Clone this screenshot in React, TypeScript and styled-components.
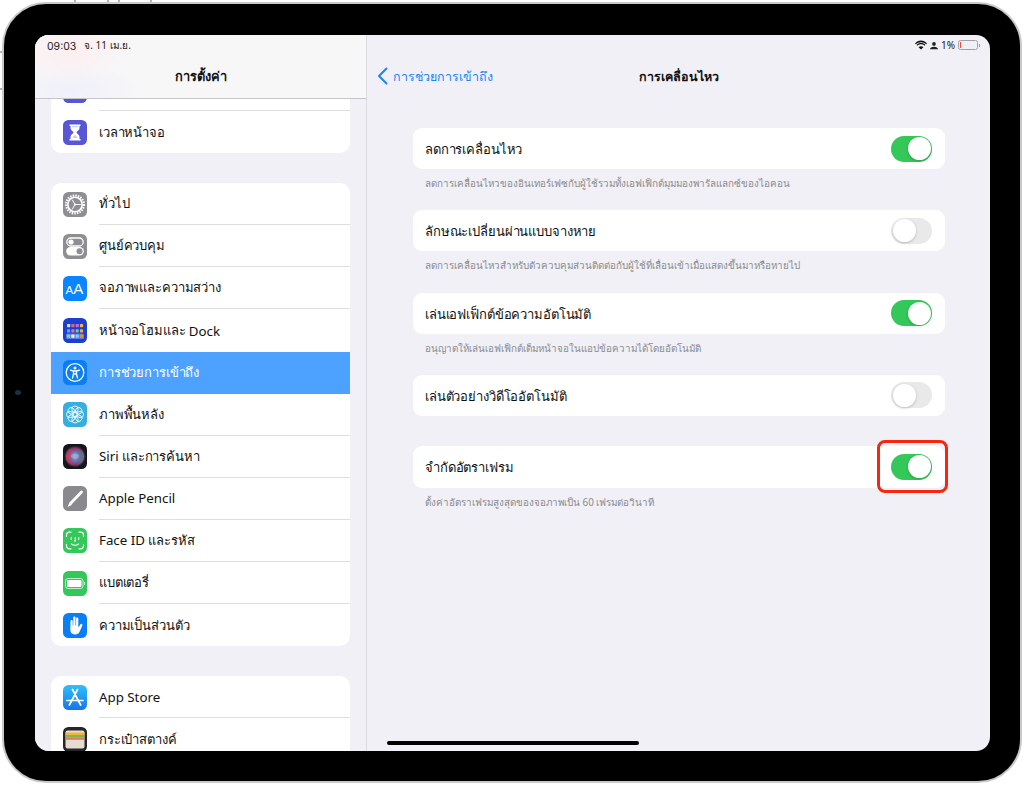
import React from "react";
import styled, { createGlobalStyle } from "styled-components";

const Global = createGlobalStyle`
  html, body { margin: 0; padding: 0; background: #fff; }
  body { font-family: "Noto Sans", "Inter", "DejaVu Sans", sans-serif; -webkit-font-smoothing: antialiased; }
`;

const Page = styled.div`
  width: 1024px;
  height: 785px;
  padding: 2px;
  box-sizing: border-box;
  overflow: hidden;
  position: relative;
`;
const Tick = styled.span<{ $x: number; $y: number }>`
  position: absolute;
  left: ${(p) => p.$x}px;
  top: ${(p) => p.$y}px;
  width: 2px;
  height: 2px;
  background: #b4b4b8;
`;
const Device = styled.div`
  width: 1020px;
  height: 781px;
  box-sizing: border-box;
  background: #000;
  border: 2px solid #c9c9cb;
  border-radius: 44px;
  padding: 31px 32px 30px 31px;
  position: relative;
`;
const Camera = styled.span`
  position: absolute;
  left: 11px;
  top: 386px;
  width: 6px;
  height: 5px;
  border-radius: 50%;
  background: #1c3147;
`;
const Screen = styled.div`
  width: 955px;
  height: 716px;
  border-radius: 14px;
  overflow: hidden;
  display: flex;
  position: relative;
  background: #f0f0f6;
`;
const Sidebar = styled.aside`
  width: 331px;
  flex: none;
  border-right: 1px solid #dcdce0;
  display: flex;
  flex-direction: column;
  background: #f0f0f6;
`;
const SideHeader = styled.header`
  height: 64px;
  flex: none;
  box-sizing: border-box;
  border-bottom: 1px solid #c6c6c9;
  background:
    radial-gradient(ellipse 60px 34px at 34px 16px, #fdeef0 0, rgba(253, 238, 240, 0) 100%),
    radial-gradient(ellipse 70px 30px at 36px 56px, #eff0fa 0, rgba(239, 240, 250, 0) 100%),
    #f7f7f8;
  position: relative;
`;
const Status = styled.div`
  position: absolute;
  left: 12px;
  top: 3px;
  font-size: 10px;
  line-height: 14px;
  color: #222;
  display: flex;
  align-items: baseline;
  gap: 8px;
`;
const Time = styled.span`
  font-family: "Inter", sans-serif;
  font-size: 10.5px;
  line-height: 14px;
  position: relative;
  top: 1px;
`;
const SideTitle = styled.h1`
  margin: 0;
  padding-top: 31px;
  text-align: center;
  font-size: 12.8px;
  line-height: 20px;
  font-weight: 700;
  color: #111;
`;
const SideList = styled.div`
  flex: 1;
  overflow: hidden;
  padding: 0 16px;
  display: flex;
  flex-direction: column;
  gap: 30px;
`;
const Group = styled.section<{ $clip?: boolean }>`
  background: #fff;
  border-radius: 10px;
  margin: ${(p) => (p.$clip ? "-30px 0 0" : "0")};
  flex: none;
`;
const Row = styled.div<{ $active?: boolean }>`
  height: 42.1px;
  box-sizing: border-box;
  padding-left: 12px;
  display: flex;
  align-items: center;
  gap: 12px;
  background: ${(p) => (p.$active ? "#4da2ff" : "transparent")};
  color: ${(p) => (p.$active ? "#fff" : "#111")};
`;
const IconBox = styled.span<{ $bg: string }>`
  width: 24px;
  height: 25px;
  flex: none;
  border-radius: 5.5px;
  background: ${(p) => p.$bg};
  display: flex;
  align-items: center;
  justify-content: center;
  overflow: hidden;
`;
const RowBody = styled.div<{ $line?: boolean }>`
  flex: 1;
  align-self: stretch;
  display: flex;
  align-items: center;
  white-space: pre;
  font-size: 13px;
  letter-spacing: -0.13px;
  border-bottom: ${(p) => (p.$line ? "1px solid #dededf" : "none")};
  box-sizing: border-box;
`;
const Latin = styled.span`
  font-size: 13.3px;
  letter-spacing: 0;
`;
const Detail = styled.main`
  flex: 1;
  position: relative;
  display: flex;
  flex-direction: column;
`;
const Nav = styled.nav`
  height: 93px;
  flex: none;
  box-sizing: border-box;
  padding: 32px 10px 0;
  position: relative;
  display: flex;
  align-items: flex-start;
  gap: 5px;
`;
const Back = styled.span`
  font-size: 12.5px;
  line-height: 20px;
  color: #1d84f5;
`;
const NavTitle = styled.h2`
  position: absolute;
  left: 0;
  right: 0;
  top: 32px;
  margin: 0;
  text-align: center;
  font-size: 12.5px;
  line-height: 20px;
  font-weight: 700;
  color: #111;
`;
const Content = styled.div`
  padding: 0 45px 0 46px;
  display: flex;
  flex-direction: column;
`;
const Card = styled.div<{ $h?: number; $mt?: number }>`
  height: ${(p) => p.$h ?? 41}px;
  margin-top: ${(p) => p.$mt ?? 0}px;
  background: #fff;
  border-radius: 9px;
  padding: 0 13px 0 12px;
  display: flex;
  align-items: center;
  justify-content: space-between;
  position: relative;
`;
const CardLabel = styled.span`
  font-size: 13px;
  letter-spacing: -0.13px;
  color: #111;
  padding-top: 2px;
`;
const Caption = styled.p`
  margin: 0 0 13.3px;
  padding: 6px 12px 0;
  height: 22px;
  font-size: 9.85px;
  line-height: 16px;
  color: #8b8b90;
`;
const Track = styled.span<{ $on: boolean }>`
  width: 41px;
  height: 26px;
  border-radius: 13px;
  background: ${(p) => (p.$on ? "#34c759" : "#e9e9ea")};
  display: flex;
  justify-content: ${(p) => (p.$on ? "flex-end" : "flex-start")};
  padding: 1.5px;
  box-sizing: border-box;
  flex: none;
`;
const Knob = styled.span`
  width: 23px;
  height: 23px;
  border-radius: 50%;
  background: #fff;
  box-shadow: 0 1px 3px rgba(0, 0, 0, 0.2);
`;
const Highlight = styled.span`
  position: absolute;
  right: -3px;
  top: -6px;
  width: 71px;
  height: 53px;
  box-sizing: border-box;
  border: 3px solid #f8260e;
  border-radius: 8px;
`;
const StatusRight = styled.div`
  position: absolute;
  right: 12px;
  top: 3px;
  height: 14px;
  display: flex;
  align-items: center;
  gap: 3px;
  font-size: 10px;
  color: #222;
`;
const Battery = styled.span`
  width: 18px;
  height: 8px;
  border: 1px solid #a2a2a6;
  border-radius: 2.5px;
  position: relative;
  display: block;
  box-sizing: content-box;
  &::before {
    content: "";
    position: absolute;
    left: 1px;
    top: 1px;
    bottom: 1px;
    width: 1px;
    background: #f04b3c;
  }
  &::after {
    content: "";
    position: absolute;
    right: -3px;
    top: 2.5px;
    width: 1.5px;
    height: 3px;
    background: #9a9a9e;
  }
`;
const Home = styled.span`
  position: absolute;
  left: 20px;
  bottom: 6px;
  width: 252px;
  height: 4px;
  border-radius: 2px;
  background: #000;
`;

const Sv = ({ children, fill = "#fff" }: { children: React.ReactNode; fill?: string }) => (
  <svg width="24" height="25" viewBox="0 0 24 25" fill={fill}>{children}</svg>
);

const gear = (
  <Sv fill="none">
    <circle cx="12" cy="12.5" r="9" stroke="#fff" strokeWidth="2.2" strokeDasharray="1.5 1.15" />
    <circle cx="12" cy="12.5" r="7.2" stroke="#fff" strokeWidth="1.6" />
    <path d="M12 12.5 9.2 7.6M12 12.5h5.8M12 12.5 9.2 17.4" stroke="#fff" strokeWidth="1" />
    <circle cx="12" cy="12.5" r="1" fill="#fff" />
  </Sv>
);
const control = (
  <Sv>
    <rect x="3.8" y="4" width="16.4" height="8" rx="4" fill="none" stroke="#fff" strokeWidth="1.3" />
    <circle cx="8" cy="8" r="2.6" fill="#fff" />
    <rect x="3.2" y="13" width="17.6" height="8.5" rx="4.2" fill="#fff" />
    <circle cx="16.5" cy="17.2" r="3" fill="#8e8e93" />
  </Sv>
);
const hourglass = (
  <Sv>
    <path d="M6.5 4.500h11V6h-1v2.300c0 1.800-2.600 3-3 4.200.4 1.200 3 2.400 3 4.200V19h1v1.500h-11V19h1v-2.300c0-1.800 2.600-3 3-4.200-.4-1.200-3-2.400-3-4.200V6h-1z" />
    <path d="M9 6v1.300h6V6zM12 14.800c-.8.900-2.200 1.800-2.500 3.200h5c-.3-1.400-1.700-2.300-2.500-3.200z" fill="#5856d6" fillOpacity=".3" />
  </Sv>
);
const aa = (
  <Sv>
    <text x="2.6" y="18" fontSize="11.5" fontFamily="Liberation Sans" fill="#fff">A</text>
    <text x="10.3" y="18" fontSize="15" fontFamily="Liberation Sans" fill="#fff">A</text>
  </Sv>
);
const dots = (
  <Sv>
    <rect x="3" y="15.5" width="18" height="5.5" rx="1.5" fill="#fff" fillOpacity=".3" />
    {[
      ["#d9d9e6", "#e85d75", "#b56ee0", "#e8b84a"],
      ["#4fa8ff", "#ff6b6b", "#5ad1a0", "#f7a541"],
      ["#6fe07b", "#e8e8f5", "#7ecbff", "#f08a3c"],
    ].map((r, y) =>
      r.map((c, x) => <rect key={`${x}${y}`} x={4 + x * 4.3} y={6 + y * 5.3} width="3.2" height="3.2" rx=".6" fill={c} />),
    )}
  </Sv>
);
const access = (
  <Sv fill="none">
    <circle cx="12" cy="12.5" r="8.8" stroke="#fff" strokeWidth="1.3" />
    <circle cx="12" cy="8" r="1.5" fill="#fff" />
    <path d="M7.500 10.200 10.500 11v3l-1 4M16.500 10.200 13.500 11v3l1 4M10.500 11h3M10.500 14h3" stroke="#fff" strokeWidth="1.3" strokeLinecap="round" strokeLinejoin="round" />
  </Sv>
);
const flower = (
  <Sv fill="none">
    {[0, 45, 90, 135, 180, 225, 270, 315].map((a) => (
      <circle key={a} cx="12" cy="7.2" r="3.2" stroke="#fff" strokeWidth=".9" transform={`rotate(${a} 12 12.5)`} />
    ))}
    <circle cx="12" cy="12.5" r="2" stroke="#fff" strokeWidth=".9" />
  </Sv>
);
const siri = (
  <Sv fill="none">
    <defs>
      <radialGradient id="siriG" cx="50%" cy="50%" r="50%">
        <stop offset="0" stopColor="#9fb2dc" />
        <stop offset=".45" stopColor="#4f7fc0" />
        <stop offset=".75" stopColor="#8f3570" />
        <stop offset="1" stopColor="#1c2a30" />
      </radialGradient>
      <linearGradient id="siriL" x1="0" x2="1">
        <stop offset="0" stopColor="#d8385a" stopOpacity=".95" />
        <stop offset=".5" stopColor="#d8385a" stopOpacity="0" />
        <stop offset="1" stopColor="#2a9d96" stopOpacity=".9" />
      </linearGradient>
    </defs>
    <circle cx="12" cy="12.5" r="10.5" fill="url(#siriG)" />
    <circle cx="12" cy="12.5" r="9" fill="url(#siriL)" />
    <ellipse cx="12" cy="12" rx="4" ry="2.6" fill="#aebfe8" fillOpacity=".45" />
  </Sv>
);
const pencil = (
  <Sv fill="none">
    <path d="M18.5 6 7.500 17.500" stroke="#fff" strokeWidth="2.8" strokeLinecap="round" />
    <path d="M6.500 16.500 4.500 21l4.300-2.100z" fill="#fff" />
  </Sv>
);
const face = (
  <Sv fill="none">
    <path d="M3.500 8.500V7A2.800 2.800 0 0 1 6.300 4.200H8M16 4.200h1.700A2.800 2.800 0 0 1 20.500 7v1.500M3.500 16.500V18a2.800 2.800 0 0 0 2.800 2.800H8M16 20.800h1.700A2.800 2.800 0 0 0 20.500 18v-1.500" stroke="#fff" strokeWidth="1.2" strokeLinecap="round" />
    <path d="M8.300 9.500v2M15.700 9.500v2M12.300 9.500v3.500h-1M8.500 16c2 1.500 5 1.500 7 0" stroke="#fff" strokeWidth="1.2" strokeLinecap="round" strokeLinejoin="round" />
  </Sv>
);
const batt = (
  <Sv>
    <rect x="2.5" y="7.5" width="17.5" height="10" rx="2.5" fill="none" stroke="#fff" strokeOpacity=".7" />
    <rect x="4" y="9" width="14.5" height="7" rx="1.3" fill="#fff" />
    <rect x="21" y="11" width="1" height="3" fill="#fff" fillOpacity=".7" />
  </Sv>
);
const hand = (
  <Sv>
    <path d="M7.500 8a1.100 1.100 0 0 1 2.200 0v4.500h.6V4.500a1.100 1.100 0 0 1 2.200 0v8h.6V5.500a1.100 1.100 0 0 1 2.200 0v8l.5.400 1.700-2.700a1.100 1.100 0 0 1 1.900 1l-2.600 6c-.9 2.100-2.400 3.300-4.800 3.300-3 0-4.700-1.900-4.700-4.700z" />
  </Sv>
);
const appstore = (
  <Sv fill="none">
    <path d="M9.500 4.500 16 17M14.500 4.500 8 17M4 15.500h16M6.300 20 8 17M17.700 20 16 17" stroke="#fff" strokeWidth="1.7" strokeLinecap="round" />
  </Sv>
);
const wallet = (
  <Sv>
    <rect x="2.5" y="3.5" width="19" height="18" rx="2" fill="#e2ddd0" />
    <rect x="2.5" y="5.5" width="19" height="2.5" fill="#f2b53c" />
    <rect x="2.5" y="8" width="19" height="2.3" fill="#79b957" />
    <rect x="2.5" y="10.3" width="19" height="2.5" fill="#e6785f" />
  </Sv>
);

const group2: { t: React.ReactNode; k: string; bg: string; i: React.ReactNode; active?: boolean }[] = [
  { k: "general", t: "ทั่วไป", bg: "#8e8e93", i: gear },
  { k: "control", t: "ศูนย์ควบคุม", bg: "#8e8e93", i: control },
  { k: "display", t: "จอภาพและความสว่าง", bg: "#0a84ff", i: aa },
  { k: "home", t: <>หน้าจอโฮมและ <Latin>Dock</Latin></>, bg: "#1c3fd0", i: dots },
  { k: "access", t: "การช่วยการเข้าถึง", bg: "#0a7ff5", i: access, active: true },
  { k: "wall", t: "ภาพพื้นหลัง", bg: "#36aee0", i: flower },
  { k: "siri", t: <><Latin>Siri</Latin> และการค้นหา</>, bg: "#15151c", i: siri },
  { k: "pencil", t: <Latin>Apple Pencil</Latin>, bg: "#8a8a8e", i: pencil },
  { k: "face", t: <><Latin>Face ID</Latin> และรหัส</>, bg: "#34c759", i: face },
  { k: "batt", t: "แบตเตอรี่", bg: "#34c759", i: batt },
  { k: "privacy", t: "ความเป็นส่วนตัว", bg: "#0a7ff5", i: hand },
];

const ticks = [
  { x: 74, y: 0 },
  { x: 107, y: 0 },
  { x: 118, y: 0 },
  { x: 150, y: 0 },
  { x: 0, y: 51 },
  { x: 0, y: 88 },
];

export default function App() {
  return (
    <Page>
      <Global />
      {ticks.map((t) => (
        <Tick key={`${t.x}-${t.y}`} $x={t.x} $y={t.y} />
      ))}
      <Device>
        <Camera />
        <Screen>
          <Sidebar>
            <SideHeader>
              <Status><Time>09:03</Time><span>จ. 11 เม.ย.</span></Status>
              <SideTitle>การตั้งค่า</SideTitle>
            </SideHeader>
            <SideList>
              <Group $clip>
                <Row>
                  <IconBox $bg="#5856d6" />
                  <RowBody $line />
                </Row>
                <Row>
                  <IconBox $bg="#5856d6">{hourglass}</IconBox>
                  <RowBody>เวลาหน้าจอ</RowBody>
                </Row>
              </Group>
              <Group>
                {group2.map((r, i) => (
                  <Row key={r.k} $active={r.active}>
                    <IconBox $bg={r.bg}>{r.i}</IconBox>
                    <RowBody $line={i < group2.length - 1 && !r.active && !group2[i + 1].active}>{r.t}</RowBody>
                  </Row>
                ))}
              </Group>
              <Group>
                <Row>
                  <IconBox $bg="linear-gradient(#2fc0fb,#1a74e8)">{appstore}</IconBox>
                  <RowBody $line><Latin>App Store</Latin></RowBody>
                </Row>
                <Row>
                  <IconBox $bg="#26262a">{wallet}</IconBox>
                  <RowBody>กระเป๋าสตางค์</RowBody>
                </Row>
              </Group>
            </SideList>
          </Sidebar>
          <Detail>
            <StatusRight>
              <svg width="12" height="10" viewBox="0 0 13 10"><path d="M6.500 2C8.700 2 10.700 2.900 12.100 4.300L13 3.300C11.300 1.300 9 .2 6.500.2S1.700 1.300 0 3.300l.9 1C2.300 2.900 4.300 2 6.500 2z" fill="#111"/><path d="M6.500 4.300c1.500 0 2.900.6 3.900 1.600l.9-1C10 3.500 8.300 2.800 6.500 2.800S3 3.500 1.700 4.900l.9 1c1-1 2.400-1.600 3.900-1.600z" fill="#111"/><path d="M6.500 6.300c-1 0-1.900.4-2.600 1.100l2.600 2.500 2.600-2.500c-.7-.7-1.600-1.100-2.600-1.100z" fill="#111"/></svg>
              <svg width="8" height="9" viewBox="0 0 10 10"><circle cx="5" cy="3" r="2.300" fill="#222"/><path d="M0 9.800c0-2 2-3.300 5-3.300s5 1.300 5 3.300z" fill="#222"/></svg>
              <span>1%</span>
              <Battery />
            </StatusRight>
            <Nav>
              <svg width="11" height="18" viewBox="0 0 11 18" fill="none"><path d="M9.500 1.500 2 9l7.500 7.500" stroke="#1d84f5" strokeWidth="2" strokeLinecap="round" strokeLinejoin="round"/></svg>
              <Back>การช่วยการเข้าถึง</Back>
              <NavTitle>การเคลื่อนไหว</NavTitle>
            </Nav>
            <Content>
              <Card><CardLabel>ลดการเคลื่อนไหว</CardLabel><Track $on><Knob /></Track></Card>
              <Caption>ลดการเคลื่อนไหวของอินเทอร์เฟซกับผู้ใช้รวมทั้งเอฟเฟ็กต์มุมมองพารัลแลกซ์ของไอคอน</Caption>
              <Card><CardLabel>ลักษณะเปลี่ยนผ่านแบบจางหาย</CardLabel><Track $on={false}><Knob /></Track></Card>
              <Caption>ลดการเคลื่อนไหวสำหรับตัวควบคุมส่วนติดต่อกับผู้ใช้ที่เลื่อนเข้าเมื่อแสดงขึ้นมาหรือหายไป</Caption>
              <Card><CardLabel>เล่นเอฟเฟ็กต์ข้อความอัตโนมัติ</CardLabel><Track $on><Knob /></Track></Card>
              <Caption>อนุญาตให้เล่นเอฟเฟ็กต์เต็มหน้าจอในแอปข้อความได้โดยอัตโนมัติ</Caption>
              <Card><CardLabel>เล่นตัวอย่างวิดีโออัตโนมัติ</CardLabel><Track $on={false}><Knob /></Track></Card>
              <Card $h={42} $mt={30}><CardLabel>จำกัดอัตราเฟรม</CardLabel><Track $on><Knob /></Track><Highlight /></Card>
              <Caption>ตั้งค่าอัตราเฟรมสูงสุดของจอภาพเป็น 60 เฟรมต่อวินาที</Caption>
            </Content>
            <Home />
          </Detail>
        </Screen>
      </Device>
    </Page>
  );
}
